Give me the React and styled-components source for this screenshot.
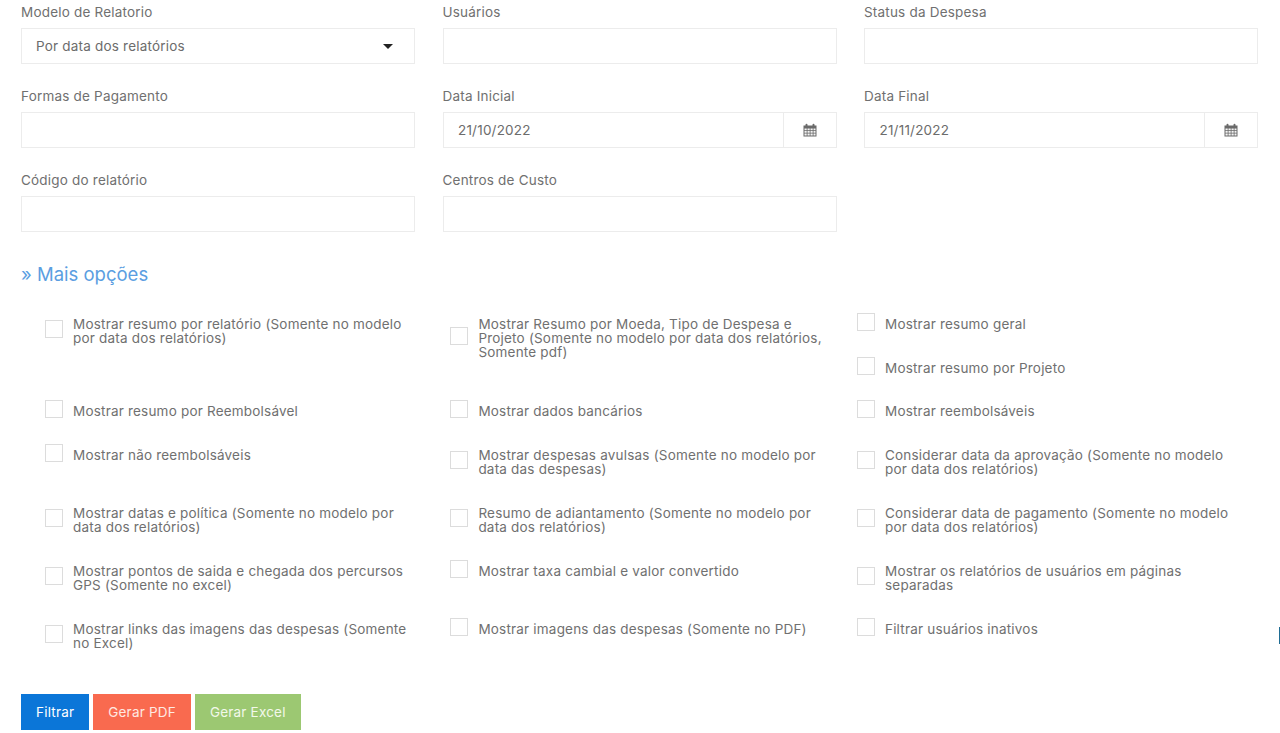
import styled, { createGlobalStyle } from "styled-components";

const GlobalStyle = createGlobalStyle`
    html, body {
        margin: 0;
        padding: 0;
        background: #fff;
        font-family: "Inter", "Liberation Sans", sans-serif;
        color: #666;
    }
`;

const Page = styled.div`
    height: 733px;
    box-sizing: border-box;
    padding: 0 22px 0 21px;
    overflow: hidden;
`;

const FormGrid = styled.div`
    display: grid;
    grid-template-columns: repeat(3, 394px);
    column-gap: 27.5px;
    row-gap: 20px;
`;

const Field = styled.div`
    display: flex;
    flex-direction: column;
`;

const Label = styled.label`
    height: 28px;
    line-height: 25px;
    font-size: 13.5px;
    letter-spacing: 0.2px;
    color: #707070;
`;

const Control = styled.div`
    display: flex;
    align-items: center;
    justify-content: space-between;
    box-sizing: border-box;
    height: 36px;
    padding: 0 15px 0 14px;
    border: 1px solid #ececec;
    font-size: 13.5px;
    letter-spacing: 0.2px;
    color: #6c6c6c;
`;

const DateControl = styled.div`
    display: flex;
    box-sizing: border-box;
    height: 36px;
    border: 1px solid #ececec;
`;

const DateValue = styled.div`
    flex: 1;
    display: flex;
    align-items: center;
    padding-left: 14.5px;
    font-size: 13.5px;
    letter-spacing: 0.2px;
    color: #6c6c6c;
`;

const DateAddon = styled.div`
    width: 52px;
    display: flex;
    align-items: center;
    justify-content: center;
    border-left: 1px solid #ececec;
`;

const Caret = styled.span`
    width: 0;
    height: 0;
    margin-right: 6px;
    border-left: 5px solid transparent;
    border-right: 5px solid transparent;
    border-top: 5px solid #222;
`;

const MoreOptions = styled.h3`
    margin: 28px 0 0;
    height: 28px;
    line-height: 28px;
    font-size: 18.5px;
    font-weight: 400;
    color: #5b9ee1;
`;

const OptionsGrid = styled.div`
    display: grid;
    grid-template-columns: 405.4px 406.6px 1fr;
    margin: 25px 0 0 24px;
`;

const OptionStack = styled.div`
    display: flex;
    flex-direction: column;

    &:nth-child(3) {
        margin-bottom: -1px;
    }
`;

const Option = styled.div`
    display: flex;
    align-items: center;
    padding-bottom: 26px;
`;

const Box = styled.span`
    flex: none;
    box-sizing: border-box;
    width: 18px;
    height: 18px;
    margin-right: 10px;
    border: 1px solid #dcdcdc;
    background: #fff;
`;

const OptionText = styled.span`
    max-width: 350px;
    padding-top: 4px;
    font-size: 13.5px;
    line-height: 14px;
    letter-spacing: 0.2px;
    color: #707070;
`;

const Actions = styled.div`
    display: flex;
    gap: 4px;
    margin-top: 18px;
`;

const ActionButton = styled.button`
    height: 36px;
    padding: 0 15px 1px;
    border: 0;
    background: ${(p) => p.$bg};
    color: ${(p) => p.$fg || "#fff"};
    font-family: inherit;
    font-size: 13.5px;
    letter-spacing: 0.2px;
`;

const EdgeMark = styled.div`
    position: fixed;
    right: 0;
    top: 627px;
    width: 1px;
    height: 17px;
    background: #1f6d94;
`;

const CalendarIcon = () => (
    <svg width="14" height="14" viewBox="0 0 14 14" aria-hidden="true">
        <path
            fill="#6a6a6a"
            d="M0.5 2.5h2V1.8a1 1 0 0 1 2 0v0.7h5V1.8a1 1 0 0 1 2 0v0.7h2v11h-13z"
        />
        <path
            fill="#f4f4f4"
            d="M1.5 5.5h2.2v1.8H1.5zM4.5 5.5h2.2v1.8H4.5zM7.5 5.5h2.2v1.8H7.5zM10.5 5.5h2v1.8h-2zM1.5 8h2.2v1.8H1.5zM4.5 8h2.2v1.8H4.5zM7.5 8h2.2v1.8H7.5zM10.5 8h2v1.8h-2zM1.5 10.5h2.2v2H1.5zM4.5 10.5h2.2v2H4.5zM7.5 10.5h2.2v2H7.5zM10.5 10.5h2v2h-2z"
        />
    </svg>
);

const OptionItem = ({ text }) => (
    <Option>
        <Box />
        <OptionText>{text}</OptionText>
    </Option>
);

const textFields = ["Usuários", "Status da Despesa"];

const options = [
    ["Mostrar resumo por relatório (Somente no modelo por data dos relatórios)"],
    ["Mostrar Resumo por Moeda, Tipo de Despesa e Projeto (Somente no modelo por data dos relatórios, Somente pdf)"],
    ["Mostrar resumo geral", "Mostrar resumo por Projeto"],
    ["Mostrar resumo por Reembolsável"],
    ["Mostrar dados bancários"],
    ["Mostrar reembolsáveis"],
    ["Mostrar não reembolsáveis"],
    ["Mostrar despesas avulsas (Somente no modelo por data das despesas)"],
    ["Considerar data da aprovação (Somente no modelo por data dos relatórios)"],
    ["Mostrar datas e política (Somente no modelo por data dos relatórios)"],
    ["Resumo de adiantamento (Somente no modelo por data dos relatórios)"],
    ["Considerar data de pagamento (Somente no modelo por data dos relatórios)"],
    ["Mostrar pontos de saida e chegada dos percursos GPS (Somente no excel)"],
    ["Mostrar taxa cambial e valor convertido"],
    ["Mostrar os relatórios de usuários em páginas separadas"],
    ["Mostrar links das imagens das despesas (Somente no Excel)"],
    ["Mostrar imagens das despesas (Somente no PDF)"],
    ["Filtrar usuários inativos"],
];

export default function App() {
    return (
        <Page>
            <GlobalStyle />
            <FormGrid>
                <Field>
                    <Label>Modelo de Relatorio</Label>
                    <Control>
                        Por data dos relatórios
                        <Caret />
                    </Control>
                </Field>
                {textFields.map((name) => (
                    <Field key={name}>
                        <Label>{name}</Label>
                        <Control />
                    </Field>
                ))}
                <Field>
                    <Label>Formas de Pagamento</Label>
                    <Control />
                </Field>
                <Field>
                    <Label>Data Inicial</Label>
                    <DateControl>
                        <DateValue>21/10/2022</DateValue>
                        <DateAddon>
                            <CalendarIcon />
                        </DateAddon>
                    </DateControl>
                </Field>
                <Field>
                    <Label>Data Final</Label>
                    <DateControl>
                        <DateValue>21/11/2022</DateValue>
                        <DateAddon>
                            <CalendarIcon />
                        </DateAddon>
                    </DateControl>
                </Field>
                <Field>
                    <Label>Código do relatório</Label>
                    <Control />
                </Field>
                <Field>
                    <Label>Centros de Custo</Label>
                    <Control />
                </Field>
            </FormGrid>

            <MoreOptions>» Mais opções</MoreOptions>

            <OptionsGrid>
                {options.map((group) => (
                    <OptionStack key={group[0]}>
                        {group.map((text) => (
                            <OptionItem key={text} text={text} />
                        ))}
                    </OptionStack>
                ))}
            </OptionsGrid>

            <Actions>
                <ActionButton $bg="#0b76d8">Filtrar</ActionButton>
                <ActionButton $bg="#f96a4f" $fg="#ffe9e2">Gerar PDF</ActionButton>
                <ActionButton $bg="#9cc872" $fg="#f2f8ea">Gerar Excel</ActionButton>
            </Actions>
            <EdgeMark />
        </Page>
    );
}
